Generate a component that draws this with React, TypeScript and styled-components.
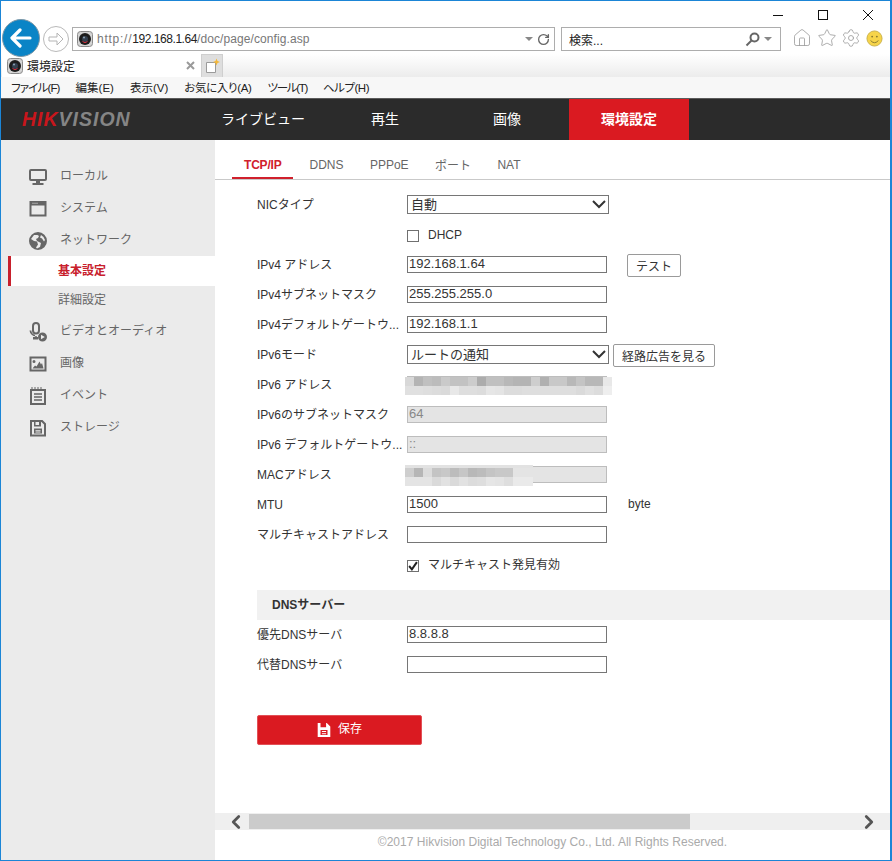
import React from "react";
import styled, { createGlobalStyle } from "styled-components";
import { House, Star, Settings, RotateCw, ChevronLeft, ChevronRight } from "lucide-react";

const Global = createGlobalStyle`
  html, body { margin: 0; padding: 0; background: #fff; }
  body { font-family: "Liberation Sans", "Noto Sans CJK JP", sans-serif; font-size: 12px; }
  * { box-sizing: border-box; }
`;

const Window = styled.div`
  width: 892px; height: 861px; border: 1px solid #1b85d6; border-right-width: 2px; display: flex; flex-direction: column; overflow: hidden; background: #fff;
`;
const TitleBar = styled.div`
  height: 26px; flex: none; display: flex; justify-content: flex-end; align-items: center; gap: 33px; padding: 2px 16px 0 0;
`;
const WinIcon = styled.svg`
  width: 12px; height: 12px; display: block; fill: none; stroke: #111; stroke-width: 1;
`;
const AddressRow = styled.div`
  height: 24px; flex: none; display: flex; align-items: center; position: relative; z-index: 2;
`;
const BackButton = styled.div`
  width: 38px; height: 38px; margin: -3px 0 0 1px; border-radius: 50%; background: #0a84c6; border: 1px solid #7d98a8; display: flex; align-items: center; justify-content: center; flex: none;
`;
const ForwardButton = styled.div`
  width: 26px; height: 26px; margin-left: 3px; border-radius: 50%; border: 1px solid #b9b9b9; background: #fff; display: flex; align-items: center; justify-content: center; flex: none;
`;
const UrlBox = styled.div`
  width: 483px; height: 24px; margin-left: 3px; border: 1px solid #adadad; display: flex; align-items: center; padding: 0 4px; gap: 4px; flex: none;
`;
const UrlText = styled.div`
  flex: 1; color: #777; font-size: 12px; letter-spacing: 0.09px; white-space: nowrap;
`;
const UrlScheme = styled.span`
  letter-spacing: 0.75px;
`;
const UrlHost = styled.span`
  color: #222; letter-spacing: -0.45px;
`;
const SearchBox = styled.div`
  width: 220px; height: 24px; margin-left: 6px; border: 1px solid #adadad; display: flex; align-items: center; padding: 0 8px 0 7px; flex: none;
`;
const SearchText = styled.div`
  flex: 1; color: #222; font-size: 12px;
`;
const Caret = styled.div<{ $ml?: number }>`
  width: 0; height: 0; border-left: 4px solid transparent; border-right: 4px solid transparent; border-top: 4px solid #888; flex: none; margin-left: ${(p) => p.$ml ?? 0}px;
`;
const ToolIcons = styled.div`
  display: flex; align-items: center; gap: 4.5px; margin: -2px 0 0 11px; color: #9c9c9c;
`;
const TabRow = styled.div`
  height: 23px; flex: none; margin-top: 3px; display: flex; background: linear-gradient(#fff, #ececec); position: relative;
`;
const Tab = styled.div`
  width: 199px; margin-left: 1px; background: #fff; display: flex; align-items: center; padding: 0 6px 0 5px; gap: 4px; color: #222; flex: none;
`;
const TabTitle = styled.div`
  flex: 1; font-size: 12px;
`;
const TabClose = styled.svg`
  width: 9px; height: 9px; fill: none; stroke: #9a9a9a; stroke-width: 2; flex: none;
`;
const NewTab = styled.div`
  width: 22px; background: #dedede; border: 1px solid #cfcfcf; border-bottom: 0; display: flex; align-items: center; justify-content: center; flex: none;
`;
const MenuBar = styled.div`
  height: 22px; flex: none; background: #f7f7f7; border-bottom: 1px solid #5b5b5b; display: flex; align-items: center; gap: 16px; padding: 0 0 2px 10px; font-size: 11.5px; color: #222; font-feature-settings: "palt";
`;
const MenuItem = styled.span<{ $ls?: number }>`
  letter-spacing: ${(p) => p.$ls ?? 0}px;
`;
const AppHeader = styled.header`
  height: 41px; flex: none; background: #2b2b2b; display: flex;
`;
const Logo = styled.div`
  width: 201px; flex: none; padding-left: 21px; display: flex; align-items: center; font-size: 19.5px; font-weight: 700; font-style: italic; letter-spacing: 1px; color: #858585;
`;
const LogoRed = styled.span`
  color: #c8161c;
`;
const NavItem = styled.div<{ $active?: boolean }>`
  width: 120px; margin: 0 1px; padding-bottom: 4px; display: flex; align-items: center; justify-content: center; font-size: 14px; color: #fff;
  background: ${(p) => (p.$active ? "#da1a21" : "transparent")};
  font-weight: ${(p) => (p.$active ? 700 : 400)};
`;
const Body = styled.div`
  flex: 1; display: flex; min-height: 0;
`;
const Sidebar = styled.nav`
  width: 214px; flex: none; background: #ebebeb; padding-top: 18px; color: #666;
`;
const SideItem = styled.div`
  height: 32px; display: flex; align-items: center; padding-left: 27px; gap: 12px; font-size: 12px; color: #666;
`;
const SideIcon = styled.svg`
  width: 20px; height: 20px; flex: none; fill: #666; display: block; margin-top: 5px;
`;
const SubItem = styled.div<{ $active?: boolean; $h: number; $pb: number }>`
  height: ${(p) => p.$h}px; margin-left: 7px; padding: 0 0 ${(p) => p.$pb}px 47px; display: flex; align-items: center; font-size: 12px;
  border-left: 3px solid ${(p) => (p.$active ? "#c8202c" : "transparent")};
  background: ${(p) => (p.$active ? "#fff" : "transparent")};
  color: ${(p) => (p.$active ? "#c8202c" : "#666")};
  font-weight: ${(p) => (p.$active ? 700 : 400)};
  margin-top: ${(p) => (p.$active ? "2px" : "0")};
`;
const Main = styled.main`
  flex: 1; min-width: 0; display: flex; flex-direction: column;
`;
const Content = styled.div`
  flex: 1; min-height: 0; overflow: hidden;
`;
const Tabs = styled.div`
  height: 40px; border-bottom: 1px solid #c9c9c9; display: flex; padding-left: 17px;
`;
const SubTab = styled.div<{ $active?: boolean }>`
  height: 39px; padding: 12px 12px 0; display: flex; align-items: center; margin-bottom: -1px; font-size: 12px;
  color: ${(p) => (p.$active ? "#d0202c" : "#666")};
  font-weight: ${(p) => (p.$active ? 700 : 400)};
  border-bottom: 2px solid ${(p) => (p.$active ? "#d0202c" : "transparent")};
  letter-spacing: ${(p) => (p.$active ? "-0.2px" : "0")};
  margin-right: ${(p) => (p.$active ? "4px" : "2.4px")};
`;
const Form = styled.div`
  padding-top: 8px;
`;
const Row = styled.div`
  height: 30px; display: flex; align-items: center; padding-left: 42px; position: relative; color: #333;
`;
const Label = styled.div`
  width: 150px; flex: none; padding: 4px 2px 0 0; line-height: 18px; white-space: nowrap; font-size: 12px; color: #333;
`;
const Field = styled.input`
  width: 200px; height: 17px; border: 1px solid #767676; background: #fff; padding: 0 1px 2px; margin: 3px 0 0; font: 13px/13px "Liberation Sans", "Noto Sans CJK JP", sans-serif; color: #333; flex: none; outline: 0; border-radius: 0;
  &:disabled { background: #e4e4e4; border-color: #bdbdbd; color: #888; }
`;
const SelectBox = styled.div`
  width: 202px; height: 19px; margin-top: 3px; border: 1px solid #767676; background: #fff; display: flex; align-items: center; justify-content: space-between; padding: 0 2px 2px 3px; font-size: 13px; color: #333; flex: none;
`;
const Chevron = styled.svg`
  width: 14px; height: 9px; margin-top: 2px; fill: none; stroke: #333; stroke-width: 2;
`;
const CheckLine = styled.div`
  display: flex; align-items: center; gap: 9px; color: #333; font-size: 12px;
`;
const CheckBox = styled.div`
  width: 12px; height: 12px; margin-top: 5px; border: 1px solid #707070; background: #fff; display: flex; align-items: center; justify-content: center;
`;
const CheckLabel = styled.div<{ $dy: number }>`
  margin-top: ${(p) => p.$dy}px; line-height: 18px;
`;
const Spacer = styled.div`
  width: 150px; flex: none;
`;
const PlainButton = styled.button<{ $w: number; $ml: number }>`
  width: ${(p) => p.$w}px; margin: 5px 0 0 ${(p) => p.$ml}px; height: 23px; background: #fff; border: 1px solid #9a9a9a; border-radius: 2px; font: 12px "Liberation Sans", "Noto Sans CJK JP", sans-serif; color: #333; padding: 0; flex: none;
`;
const Unit = styled.div`
  margin: 2px 0 0 21px; color: #333; font-size: 12px; line-height: 18px;
`;
const Mosaic = styled.svg<{ $y: number }>`
  position: absolute; display: block; left: 190px; top: ${(p) => p.$y}px;
`;
const SectionBar = styled.div`
  height: 30px; margin: 12px 0 -2px 42px; background: #f1f1f1; display: flex; align-items: center; padding: 0 0 4px 15px; font-weight: 700; font-size: 12px; color: #333;
`;
const SaveButton = styled.button`
  width: 165px; height: 30px; margin: 37px 0 0 42px; background: #da1a21; border: 1px solid #e25056; border-radius: 2px; color: #fff; display: flex; align-items: center; justify-content: center; gap: 7px; font: 12px "Liberation Sans", "Noto Sans CJK JP", sans-serif; padding: 0 0 5px 0;
`;
const SaveIcon = styled.svg`
  width: 14px; height: 14px; fill: #fff; margin-top: 4px; flex: none;
`;
const Scrollbar = styled.div`
  height: 17px; flex: none; background: #efefef; display: flex; align-items: center; justify-content: space-between; position: relative; padding: 0 10px; color: #555;
`;
const Thumb = styled.div`
  position: absolute; left: 34px; top: 1px; width: 441px; height: 15px; background: #cbcbcb;
`;
const Footer = styled.footer`
  height: 30px; flex: none; display: flex; justify-content: center; padding: 5px 0 0 0; color: #aaa; font-size: 12px; letter-spacing: 0.03px;
`;

const Camera = () => (
  <svg width="16" height="16" viewBox="0 0 16 16">
    <rect x="0.5" y="0.5" width="15" height="15" rx="3" fill="#d4d4d4" stroke="#8a8a8a" />
    <circle cx="8" cy="8" r="6" fill="#1c1c1c" />
    <circle cx="8" cy="8" r="3" fill="#33404f" />
    <circle cx="7" cy="6.500" r="1" fill="#8fa3b5" />
    <path d="M5.500 10.500a3.500 3.500 0 0 0 5 0" stroke="#d02d3b" fill="none" />
  </svg>
);

const Sicon: Record<string, React.ReactNode> = {
  monitor: (
    <>
      <path fillRule="evenodd" d="M3 2h14a2 2 0 0 1 2 2v8a2 2 0 0 1-2 2H3a2 2 0 0 1-2-2V4a2 2 0 0 1 2-2zm0 2v8h14V4z" />
      <rect x="8" y="14" width="4" height="3" />
      <rect x="4.500" y="16" width="11" height="2" />
    </>
  ),
  window: (
    <path fillRule="evenodd" d="M1.500 2h17v15.500h-17zm2 4.500v9h13v-9zM4.500 3.700h1v1h-1zm2 0h1v1h-1zm2 0h1v1h-1z" />
  ),
  globe: (
    <path fillRule="evenodd" d="M10 1a9 9 0 1 1 0 18 9 9 0 0 1 0-18zM6 4 3 8l3 2 3 .500 1 3-2 3 1 1 3-1.500 1-4-4-2-1-2 2-1 1-2-1.500-1zm7 0-1 2.500 2 1 2 3 1-1.500-1.500-3z" />
  ),
  mic: (
    <>
      <path fillRule="evenodd" d="M8 0a4 4 0 0 1 4 4v4.500a4 4 0 0 1-8 0V4a4 4 0 0 1 4-4zm0 2a2 2 0 0 0-2 2v4.500a2 2 0 0 0 4 0V4a2 2 0 0 0-2-2z" />
      <path d="M1.500 8.500h1.800a4.700 4.700 0 0 0 3.700 4.300V15H5v2.500h5V15H8.800v-1a6 6 0 0 1-7.300-5.500z" />
      <path fillRule="evenodd" d="M14.500 10.500a4.500 4.500 0 1 1 0 9 4.500 4.500 0 0 1 0-9zM13 12.700v4.600l3.800-2.300z" />
    </>
  ),
  image: (
    <path fillRule="evenodd" d="M1.500 2.500H18.500V17.500H1.500zm2 2v11h13v-11zM6 6a1.500 1.500 0 1 1 0 3 1.500 1.500 0 0 1 0-3zM4.500 14.500l2.500-3 1.500 1 3-5 1.500 3 1-1.500 1.500 5.500z" />
  ),
  calendar: (
    <path fillRule="evenodd" d="M2 3h1.500V1h1v2h2V1h1v2h2V1h1v2h2V1h1v2H18v16H2zm2 2v12h12V5zM6 7.200h8v1.500H6zm0 3h8v1.500H6zm0 3h8v1.500H6z" />
  ),
  floppy: (
    <path fillRule="evenodd" d="M2 2h12.500L18 5.500V18.500H2zm2 2v12.500h12V6.500L13.500 4H13v4.500H6V4zm3.500 0v3H11V4zM6 10.500h8v5H6zm1.500 1.400v.800h5v-.800zm0 1.700v.800h5v-.800z" />
  ),
};

const SideRow = ({ icon, label }: { icon: string; label: string }) => (
  <SideItem>
    <SideIcon viewBox="0 0 20 20">{Sicon[icon]}</SideIcon>
    {label}
  </SideItem>
);

const v6Top = ["d8", "b4", "c0", "bc", "ca", "c2", "c2", "cc", "ac", "c0", "c0", "b8", "b4", "b4", "ce", "b0", "c8", "c8", "b8", "c4", "b8", "b8", "e8"];
const v6Bot = ["e0", "e0", "de", "dc", "da", "e8", "de", "de", "dc", "e6", "e4", "dc", "dc", "de", "de", "de", "de", "de", "de", "da", "e0", "dc", "ee"];
const macTop = ["ce", "b6", "dc", "c4", "c8", "bc", "c6", "b8", "bc", "c4", "c8", "c8", "e4", "e4", "e4"];
const macBot = ["e4", "e4", "e4", "da", "e2", "da", "e2", "dc", "de", "e6", "e4", "de", "ea", "ea", "ea"];

const Redacted = ({ top, bot, w, y, h, band }: { top: string[]; bot: string[]; w: number; y: number; h: number; band?: boolean }) => (
  <Mosaic $y={y} width={w} height={h} viewBox={`0 0 ${w} ${h}`} shapeRendering="crispEdges">
    {top.map((c, i) => (
      <rect key={i} x={i * 9} y={0} width={9} height={h - 9} fill={`#${c}${c}${c}`} />
    ))}
    {bot.map((c, i) => (
      <rect key={i} x={i * 9} y={h - 9} width={9} height={9} fill={`#${c}${c}${c}`} />
    ))}
    {band ? <rect x={0} y={0} width={w} height={3} fill="#e2e2e2" /> : null}
  </Mosaic>
);

export default function App() {
  return (
    <>
      <Global />
      <Window>
        <TitleBar>
          <WinIcon viewBox="0 0 12 12"><path d="M1 6.500h10" /></WinIcon>
          <WinIcon viewBox="0 0 12 12"><rect x="1.500" y="1.500" width="9" height="9" /></WinIcon>
          <WinIcon viewBox="0 0 12 12"><path d="M1 1l10 10M11 1 1 11" /></WinIcon>
        </TitleBar>
        <AddressRow>
          <BackButton>
            <svg width="22" height="20" viewBox="0 0 22 20" fill="none" stroke="#fff" strokeWidth="3.200" strokeLinecap="round" strokeLinejoin="round">
              <path d="M10 2 2 10l8 8M3 10h17" />
            </svg>
          </BackButton>
          <ForwardButton>
            <svg width="16" height="14" viewBox="0 0 16 14" fill="none" stroke="#b5b5b5" strokeWidth="1">
              <path d="M9 1l6 6-6 6v-4H1V5h8z" />
            </svg>
          </ForwardButton>
          <UrlBox>
            <Camera />
            <UrlText><UrlScheme>http://</UrlScheme><UrlHost>192.168.1.64</UrlHost>/doc/page/config.asp</UrlText>
            <Caret />
            <RotateCw size={13} color="#666" strokeWidth={2.500} />
          </UrlBox>
          <SearchBox>
            <SearchText>検索...</SearchText>
            <svg width="15" height="15" viewBox="0 0 15 15" fill="none" stroke="#666" strokeWidth="2">
              <circle cx="9.500" cy="5.500" r="4" />
              <path d="M6.500 8.500 1.500 13.500" />
            </svg>
            <Caret $ml={4} />
          </SearchBox>
          <ToolIcons>
            <House size={20} strokeWidth={1} />
            <Star size={20} strokeWidth={1} />
            <Settings size={20} strokeWidth={1} />
            <svg width="17" height="17" viewBox="0 0 18 18">
              <circle cx="9" cy="9" r="8" fill="#f6d44a" stroke="#c9b04a" />
              <circle cx="6.500" cy="7" r="1" fill="#8a7a30" />
              <circle cx="11.500" cy="7" r="1" fill="#8a7a30" />
              <path d="M5 11a4.500 4.500 0 0 0 8 0" fill="none" stroke="#8a7a30" />
            </svg>
          </ToolIcons>
        </AddressRow>
        <TabRow>
          <Tab>
            <Camera />
            <TabTitle>環境設定</TabTitle>
            <TabClose viewBox="0 0 9 9"><path d="M1 1l7 7M8 1 1 8" /></TabClose>
          </Tab>
          <NewTab>
            <svg width="17" height="17" viewBox="0 0 17 17">
              <path d="M2.500 4.500h9v10h-9z" fill="#fff" stroke="#9a9a9a" />
              <path d="M12.500 0.500l1 2.500 2.500 1-2.500 1-1 2.500-1-2.500-2.500-1 2.500-1z" fill="#f3b73a" />
            </svg>
          </NewTab>
        </TabRow>
        <MenuBar>
          <MenuItem $ls={-0.85}>ファイル(F)</MenuItem>
          <MenuItem>編集(E)</MenuItem>
          <MenuItem>表示(V)</MenuItem>
          <MenuItem $ls={-0.35}>お気に入り(A)</MenuItem>
          <MenuItem $ls={-1.3}>ツール(T)</MenuItem>
          <MenuItem $ls={-0.5}>ヘルプ(H)</MenuItem>
        </MenuBar>
        <AppHeader>
          <Logo><LogoRed>HIK</LogoRed>VISION</Logo>
          <NavItem>ライブビュー</NavItem>
          <NavItem>再生</NavItem>
          <NavItem>画像</NavItem>
          <NavItem $active>環境設定</NavItem>
        </AppHeader>
        <Body>
          <Sidebar>
            <SideRow icon="monitor" label="ローカル" />
            <SideRow icon="window" label="システム" />
            <SideRow icon="globe" label="ネットワーク" />
            <SubItem $active $h={30} $pb={4}>基本設定</SubItem>
            <SubItem $h={27} $pb={2}>詳細設定</SubItem>
            <SideRow icon="mic" label="ビデオとオーディオ" />
            <SideRow icon="image" label="画像" />
            <SideRow icon="calendar" label="イベント" />
            <SideRow icon="floppy" label="ストレージ" />
          </Sidebar>
          <Main>
            <Content>
              <Tabs>
                <SubTab $active>TCP/IP</SubTab>
                <SubTab>DDNS</SubTab>
                <SubTab>PPPoE</SubTab>
                <SubTab>ポート</SubTab>
                <SubTab>NAT</SubTab>
              </Tabs>
              <Form>
                <Row>
                  <Label>NICタイプ</Label>
                  <SelectBox>
                    自動
                    <Chevron viewBox="0 0 14 9"><path d="M1 1l6 6 6-6" /></Chevron>
                  </SelectBox>
                </Row>
                <Row>
                  <Spacer />
                  <CheckLine><CheckBox /><CheckLabel $dy={4}>DHCP</CheckLabel></CheckLine>
                </Row>
                <Row>
                  <Label>IPv4 アドレス</Label>
                  <Field value="192.168.1.64" readOnly />
                  <PlainButton $w={54} $ml={20}>テスト</PlainButton>
                </Row>
                <Row>
                  <Label>IPv4サブネットマスク</Label>
                  <Field value="255.255.255.0" readOnly />
                </Row>
                <Row>
                  <Label>IPv4デフォルトゲートウ...</Label>
                  <Field value="192.168.1.1" readOnly />
                </Row>
                <Row>
                  <Label>IPv6モード</Label>
                  <SelectBox>
                    ルートの通知
                    <Chevron viewBox="0 0 14 9"><path d="M1 1l6 6 6-6" /></Chevron>
                  </SelectBox>
                  <PlainButton $w={102} $ml={4}>経路広告を見る</PlainButton>
                </Row>
                <Row>
                  <Label>IPv6 アドレス</Label>
                  <Field disabled />
                  <Redacted top={v6Top} bot={v6Bot} w={207} y={9} h={18} />
                </Row>
                <Row>
                  <Label>IPv6のサブネットマスク</Label>
                  <Field value="64" disabled />
                </Row>
                <Row>
                  <Label>IPv6 デフォルトゲートウ...</Label>
                  <Field value="::" disabled />
                </Row>
                <Row>
                  <Label>MACアドレス</Label>
                  <Field disabled />
                  <Redacted top={macTop} bot={macBot} w={128} y={7} h={21} band />
                </Row>
                <Row>
                  <Label>MTU</Label>
                  <Field value="1500" readOnly />
                  <Unit>byte</Unit>
                </Row>
                <Row>
                  <Label>マルチキャストアドレス</Label>
                  <Field readOnly />
                </Row>
                <Row>
                  <Spacer />
                  <CheckLine>
                    <CheckBox>
                      <svg width="10" height="10" viewBox="0 0 9 9" fill="none" stroke="#222" strokeWidth="1.800">
                        <path d="M1 4.500 3.500 7.500 8 1" />
                      </svg>
                    </CheckBox>
                    <CheckLabel $dy={4}>マルチキャスト発見有効</CheckLabel>
                  </CheckLine>
                </Row>
                <SectionBar>DNSサーバー</SectionBar>
                <Row>
                  <Label>優先DNSサーバ</Label>
                  <Field value="8.8.8.8" readOnly />
                </Row>
                <Row>
                  <Label>代替DNSサーバ</Label>
                  <Field readOnly />
                </Row>
                <SaveButton>
                  <SaveIcon viewBox="0 0 20 20">
                    <path fillRule="evenodd" d="M1 0h13l5 5v15H1zM5 0v6h8V0zM5 10v7h10v-7zm2 1.500h6V13H7zm0 3h6V16H7z" />
                  </SaveIcon>
                  保存
                </SaveButton>
              </Form>
            </Content>
            <Scrollbar>
              <Thumb />
              <ChevronLeft size={22} strokeWidth={3} />
              <ChevronRight size={22} strokeWidth={3} />
            </Scrollbar>
            <Footer>©2017 Hikvision Digital Technology Co., Ltd. All Rights Reserved.</Footer>
          </Main>
        </Body>
      </Window>
    </>
  );
}
